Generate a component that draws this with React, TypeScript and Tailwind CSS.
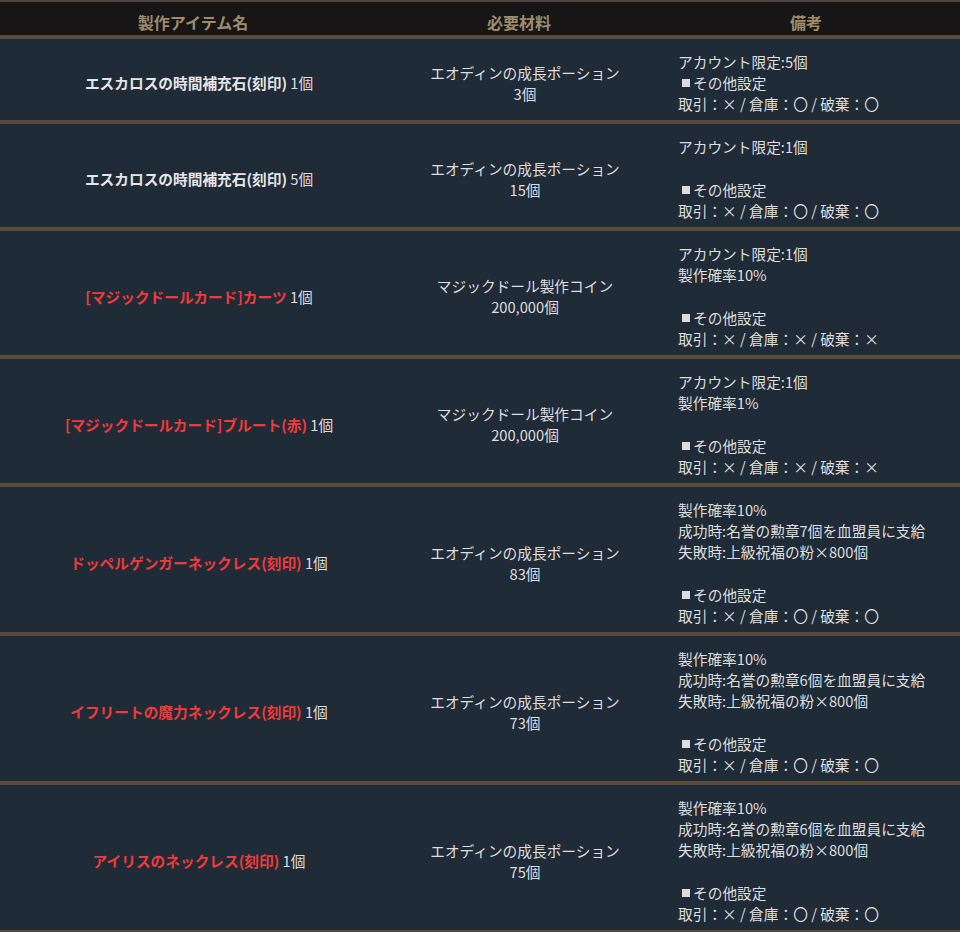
import React from "react";

type Row = {
  name: string;
  red: boolean;
  qty: string;
  mat: string;
  matQty: string;
  remarks: string[];
};

const rows: Row[] = [
  {
    name: "エスカロスの時間補充石(刻印)",
    red: false,
    qty: "1個",
    mat: "エオディンの成長ポーション",
    matQty: "3個",
    remarks: ["アカウント限定:5個", "■その他設定", "取引：× / 倉庫：〇 / 破棄：〇"],
  },
  {
    name: "エスカロスの時間補充石(刻印)",
    red: false,
    qty: "5個",
    mat: "エオディンの成長ポーション",
    matQty: "15個",
    remarks: ["アカウント限定:1個", "", "■その他設定", "取引：× / 倉庫：〇 / 破棄：〇"],
  },
  {
    name: "[マジックドールカード]カーツ",
    red: true,
    qty: "1個",
    mat: "マジックドール製作コイン",
    matQty: "200,000個",
    remarks: ["アカウント限定:1個", "製作確率10%", "", "■その他設定", "取引：× / 倉庫：× / 破棄：×"],
  },
  {
    name: "[マジックドールカード]ブルート(赤)",
    red: true,
    qty: "1個",
    mat: "マジックドール製作コイン",
    matQty: "200,000個",
    remarks: ["アカウント限定:1個", "製作確率1%", "", "■その他設定", "取引：× / 倉庫：× / 破棄：×"],
  },
  {
    name: "ドッペルゲンガーネックレス(刻印)",
    red: true,
    qty: "1個",
    mat: "エオディンの成長ポーション",
    matQty: "83個",
    remarks: [
      "製作確率10%",
      "成功時:名誉の勲章7個を血盟員に支給",
      "失敗時:上級祝福の粉×800個",
      "",
      "■その他設定",
      "取引：× / 倉庫：〇 / 破棄：〇",
    ],
  },
  {
    name: "イフリートの魔力ネックレス(刻印)",
    red: true,
    qty: "1個",
    mat: "エオディンの成長ポーション",
    matQty: "73個",
    remarks: [
      "製作確率10%",
      "成功時:名誉の勲章6個を血盟員に支給",
      "失敗時:上級祝福の粉×800個",
      "",
      "■その他設定",
      "取引：× / 倉庫：〇 / 破棄：〇",
    ],
  },
  {
    name: "アイリスのネックレス(刻印)",
    red: true,
    qty: "1個",
    mat: "エオディンの成長ポーション",
    matQty: "75個",
    remarks: [
      "製作確率10%",
      "成功時:名誉の勲章6個を血盟員に支給",
      "失敗時:上級祝福の粉×800個",
      "",
      "■その他設定",
      "取引：× / 倉庫：〇 / 破棄：〇",
    ],
  },
];

function RemarkLine({ text }: { text: string }) {
  if (text === "") return <div className="h-[22px]" />;
  if (text.startsWith("■")) {
    return (
      <div className="h-[21px] flex items-center whitespace-nowrap">
        <span className="inline-block w-[8px] h-[8px] bg-[#dcdcdc] ml-[4px] mr-[3px]" />
        <span>{text.slice(1)}</span>
      </div>
    );
  }
  return <div className="h-[21px] whitespace-nowrap">{text}</div>;
}

export default function App() {
  return (
    <div className="w-[960px] h-[932px] bg-[#202b38] font-['Noto_Sans_CJK_JP','Noto_Sans',sans-serif] text-[14.7px] leading-[21px] text-[#dedede] overflow-hidden">
      <div className="grid grid-cols-[386px_266px_308px] bg-[#171515] border-t-2 border-t-[#4a4540] border-b-4 border-b-[#5b4a39] text-[16px] font-bold text-[#9e8c6c]">
        <div className="pt-[10px] pb-[2px] text-center">製作アイテム名</div>
        <div className="pt-[10px] pb-[2px] text-center">必要材料</div>
        <div className="pt-[10px] pb-[2px] text-center">備考</div>
      </div>
      {rows.map((r, i) => (
        <div
          key={i}
          className="grid grid-cols-[398px_254px_308px] border-b-4 border-b-[#5b4a39]"
        >
          <div className="flex items-center justify-center pt-[12px] pb-[6px] text-center">
            <span>
              <span className={r.red ? "font-bold text-[#f23a3a]" : "font-bold text-[#e6e6e6]"}>{r.name}</span>
              <span> {r.qty}</span>
            </span>
          </div>
          <div className="flex flex-col items-center justify-center pt-[12px] pb-[6px] text-center">
            <div>{r.mat}</div>
            <div>{r.matQty}</div>
          </div>
          <div className="flex flex-col pl-[26px] pt-[12px] pb-[6px]">
            {r.remarks.map((t, j) => (
              <RemarkLine key={j} text={t} />
            ))}
          </div>
        </div>
      ))}
    </div>
  );
}
